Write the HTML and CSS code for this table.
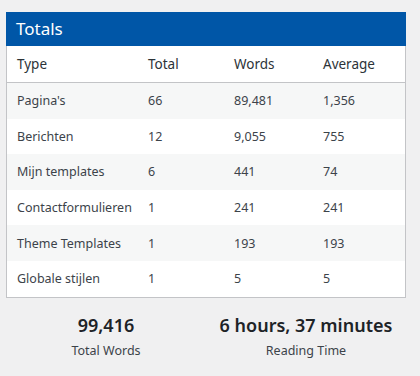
FILE: index.html
```html
<!DOCTYPE html>
<html>
<head>
<meta charset="utf-8">
<link rel="stylesheet" href="styles.css">
</head>
<body>
<div class="wrap">
  <section class="card">
    <h2 class="card-title">Totals</h2>
    <table class="totals">
      <thead>
        <tr><th>Type</th><th>Total</th><th>Words</th><th>Average</th></tr>
      </thead>
      <tbody>
        <tr><td>Pagina's</td><td>66</td><td>89,481</td><td>1,356</td></tr>
        <tr><td>Berichten</td><td>12</td><td>9,055</td><td>755</td></tr>
        <tr><td>Mijn templates</td><td>6</td><td>441</td><td>74</td></tr>
        <tr><td>Contactformulieren</td><td>1</td><td>241</td><td>241</td></tr>
        <tr><td>Theme Templates</td><td>1</td><td>193</td><td>193</td></tr>
        <tr><td>Globale stijlen</td><td>1</td><td>5</td><td>5</td></tr>
      </tbody>
    </table>
  </section>
  <div class="stats">
    <div class="stat"><div class="stat-value">99,416</div><div class="stat-label">Total Words</div></div>
    <div class="stat"><div class="stat-value">6 hours, 37 minutes</div><div class="stat-label">Reading Time</div></div>
  </div>
</div>
</body>
</html>
```

FILE: styles.css
```css
html, body {
  margin: 0;
  padding: 0;
  background: #f0f0f1;
  font-family: "Noto Sans", "Open Sans", sans-serif;
  color: #3c434a;
}
.wrap {
  width: 400px;
  padding: 12px 0 0 6px;
}
.card {
  background: #fff;
  border: 1px solid #c3c4c7;
  border-top: none;
}
.card-title {
  margin: 0;
  background: #0056a7;
  color: #fff;
  font-size: 17px;
  font-weight: 400;
  height: 34px;
  line-height: 34px;
  padding: 0 10px;
  margin: 0 -1px;
}
.totals {
  width: 100%;
  border-collapse: collapse;
  font-size: 12.5px;
}
.totals th, .totals td {
  text-align: left;
  font-weight: 400;
  padding: 0 0 0 10px;
  height: 35.6px;
}
.totals th {
  height: 36px;
  font-size: 13.5px;
  color: #2c3338;
  border-bottom: 1px solid #c3c4c7;
}
.totals th:nth-child(1) { width: 121px; }
.totals th:nth-child(2) { width: 76px; }
.totals th:nth-child(3) { width: 79px; }
.totals tbody tr:nth-child(odd) { background: #f6f7f7; }
.stats {
  display: grid;
  grid-template-columns: 1fr 1fr;
  margin-top: 14px;
}
.stat {
  text-align: center;
}
.stat-value {
  font-size: 18px;
  font-weight: 600;
  color: #1d2327;
  line-height: 26px;
}
.stat-label {
  font-size: 12.5px;
  color: #3c434a;
  margin-top: 4px;
}
```
